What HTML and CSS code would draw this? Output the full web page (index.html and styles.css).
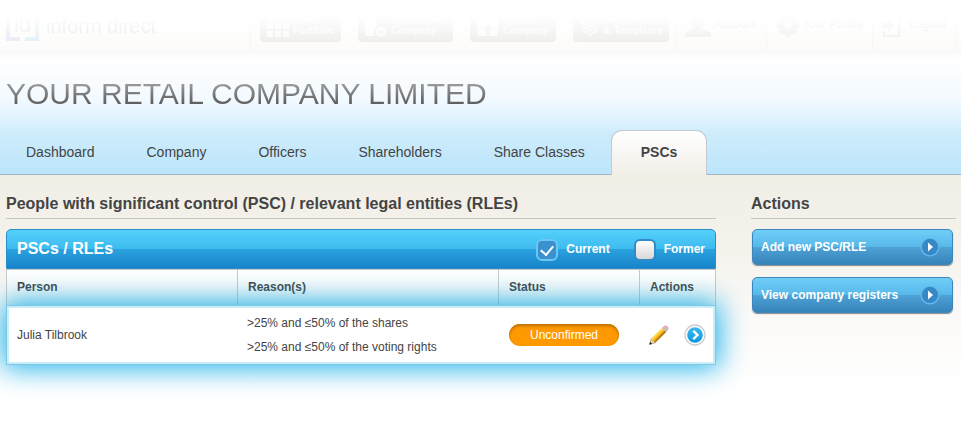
FILE: index.html
```html
<!DOCTYPE html>
<html lang="en">
<head>
<meta charset="utf-8">
<title>Your Retail Company Limited</title>
<link rel="stylesheet" href="styles.css">
</head>
<body>
<header class="topbar">
  <div class="topbar-content">
    <a class="logo" href="#">
      <span class="logo-mark">id</span>
      <span class="logo-text">inform direct</span>
    </a>
    <div class="shortcuts">
      <a class="shortcut" href="#">
        <svg width="22" height="22" viewBox="0 0 22 22" fill="#fff"><path d="M0 0h6v6H0zM8 0h6v6H8zM16 0h6v6h-6zM0 8h6v6H0zM8 8h6v6H8zM16 8h6v6h-6zM0 16h6v6H0zM8 16h6v6H8zM16 16h6v6h-6z"/></svg>
        <span>Your<br>Portfolio</span>
      </a>
      <a class="shortcut" href="#">
        <svg width="22" height="22" viewBox="0 0 22 22" fill="#fff"><path d="M0 2h11v10a6 6 0 0 0-1 9H0z"/><circle cx="16" cy="17" r="5"/><path d="M16 14v6M13 17h6" stroke="#bbb" stroke-width="1.6"/></svg>
        <span>Incorporate<br>Company</span>
      </a>
      <a class="shortcut" href="#">
        <svg width="22" height="22" viewBox="0 0 22 22" fill="#fff"><path d="M0 4h22l-2 17H1z"/><path d="M11 9l6 6h-4v5H9v-5H5z" fill="#bbb"/></svg>
        <span>Import<br>Company</span>
      </a>
      <a class="shortcut" href="#">
        <svg width="20" height="22" viewBox="0 0 22 22" fill="none" stroke="#fff" stroke-width="1.5"><path d="M11 2l9 5-9 5-9-5zM2 11l9 5 9-5M2 15l9 6 9-6"/></svg>
        <span>Documents<br>&amp; Templates</span>
      </a>
    </div>
    <nav class="user-links">
      <a href="#"><svg width="26" height="24" viewBox="0 0 26 24"><path d="M0 24v-3c0-3 8-4 9-6-5-6-3-14 4-14s9 8 4 14c1 2 9 3 9 6v3z"/></svg>Account</a>
      <a href="#"><svg width="24" height="24" viewBox="0 0 24 24"><circle cx="12" cy="12" r="6.500" fill="none" stroke="#bbb" stroke-width="6"/><path d="M12 0v5M12 19v5M0 12h5M19 12h5M4 4l3 3M17 17l3 3M20 4l-3 3M7 17l-3 3" stroke="#bbb" stroke-width="5"/></svg>Your Profile</a>
      <a href="#"><svg width="18" height="24" viewBox="0 0 18 24"><path d="M2 18v5h15V1H2v4" fill="none" stroke="#bbb" stroke-width="2"/><path d="M0 9h6V5l6 7-6 7v-4H0z"/></svg>Logout</a>
    </nav>
  </div>
</header>

<section class="hero">
  <h1 class="company-name">YOUR RETAIL COMPANY LIMITED</h1>
  <nav class="tabs">
    <a class="tab" href="#">Dashboard</a>
    <a class="tab" href="#">Company</a>
    <a class="tab" href="#">Officers</a>
    <a class="tab" href="#">Shareholders</a>
    <a class="tab" href="#">Share Classes</a>
    <a class="tab tab-active" href="#" aria-current="page">PSCs</a>
  </nav>
</section>

<main class="content">
  <section class="people">
    <h2 class="section-title">People with significant control (PSC) / relevant legal entities (RLEs)</h2>
    <div class="panel">
      <div class="panel-header">
        <h3 class="panel-title">PSCs / RLEs</h3>
        <label class="filter"><input class="check" type="checkbox" checked>Current</label>
        <label class="filter"><input class="check" type="checkbox">Former</label>
      </div>
      <table class="grid">
        <colgroup><col class="col-person"><col class="col-reasons"><col class="col-status"><col class="col-actions"></colgroup>
        <thead>
          <tr><th>Person</th><th>Reason(s)</th><th>Status</th><th>Actions</th></tr>
        </thead>
        <tbody>
          <tr class="row-highlight">
            <td>Julia Tilbrook</td>
            <td class="reasons">&gt;25% and ≤50% of the shares<br>&gt;25% and ≤50% of the voting rights</td>
            <td><span class="badge">Unconfirmed</span></td>
            <td>
              <div class="row-actions">
                <button class="icon-button" type="button" aria-label="Edit">
                  <svg width="20" height="20" viewBox="0 0 20 20">
                    <path d="M.6 19.4l1.6-5.8 4.2 4.2z" fill="#f0d6a4" stroke="#8d7650" stroke-width=".5"/>
                    <path d="M.4 19.6l.7-2.8 2.1 2.1z" fill="#222"/>
                    <path d="M2.2 13.6L13 2.9l1.5 1.5L3.7 15.1z" fill="#ffd84c"/>
                    <path d="M3.5 15L14.4 4.2l1.6 1.6L5.1 16.6z" fill="#fbb416"/>
                    <path d="M5 16.5L15.8 5.6l1.4 1.4L6.4 17.8z" fill="#b77808"/>
                    <path d="M13 2.9l1.8-1.7 4.1 4.1-1.7 1.7z" fill="#b9bec5"/>
                    <path d="M14.8 1.2c1.2-1.2 2.6-.7 3.7.4s1.600 2.500.4 3.700z" fill="#eba3b0"/>
                  </svg>
                </button>
                <button class="icon-button" type="button" aria-label="Open">
                  <svg width="22" height="22" viewBox="0 0 22 22">
                    <defs><linearGradient id="disc" x1="0" y1="0" x2="0" y2="1"><stop offset="0" stop-color="#3fb9ee"/><stop offset="1" stop-color="#0799df"/></linearGradient></defs>
                    <circle cx="11" cy="11" r="10" fill="#fff" stroke="#ccc" stroke-width="1.300"/>
                    <circle cx="11" cy="11" r="7.800" fill="url(#disc)"/>
                    <path d="M9.300 6.800l4.200 4.200-4.200 4.200" fill="none" stroke="#fff" stroke-width="2.400"/>
                  </svg>
                </button>
              </div>
            </td>
          </tr>
        </tbody>
      </table>
    </div>
  </section>

  <aside class="sidebar">
    <h2 class="section-title">Actions</h2>
    <div class="action-list">
      <button class="action" type="button">Add new PSC/RLE
        <svg width="20" height="20" viewBox="0 0 20 20"><circle cx="10" cy="10" r="8.800" fill="#3688c7" stroke="#65bdee" stroke-width="1.200"/><path d="M8 5.500l5 4.500-5 4.500z" fill="#fff"/></svg>
      </button>
      <button class="action" type="button">View company registers
        <svg width="20" height="20" viewBox="0 0 20 20"><circle cx="10" cy="10" r="8.800" fill="#3688c7" stroke="#65bdee" stroke-width="1.200"/><path d="M8 5.500l5 4.500-5 4.500z" fill="#fff"/></svg>
      </button>
    </div>
  </aside>
</main>
</body>
</html>
```
FILE: styles.css
```css
* {
  box-sizing: border-box;
}

body {
  margin: 0;
  background: #fff;
  color: #444;
  font-family: "Liberation Sans", Arial, sans-serif;
  font-size: 12px;
}

a {
  color: inherit;
  text-decoration: none;
}

h1, h2, h3 {
  margin: 0;
}

button {
  font: inherit;
  cursor: pointer;
}

svg {
  display: block;
  flex: none;
}

/* Top bar: fades in from the top of the window */
.topbar {
  height: 50px;
  background: linear-gradient(#fff 20px, #fcfbf9);
}

.topbar-content {
  display: flex;
  height: 50px;
  padding-right: 5px;
  -webkit-mask-image: linear-gradient(transparent 15px, rgba(0, 0, 0, 0.2) 46px);
  mask-image: linear-gradient(transparent 15px, rgba(0, 0, 0, 0.2) 46px);
}

.logo {
  display: flex;
  gap: 7px;
  flex: 1;
  padding: 8px 6px;
}

.logo-mark {
  width: 33px;
  height: 33px;
  border: 4px solid;
  border-top: 0;
  border-image: linear-gradient(90deg, #8fa0d8 14px, transparent 14px, transparent 19px, #6db8f0 19px) 4;
  color: #999;
  font-size: 22px;
  line-height: 34px;
  text-align: center;
}

.logo-text {
  color: #888;
  font-size: 20px;
  line-height: 36px;
}

.shortcuts {
  display: flex;
  gap: 17px;
  padding: 0 6px 8px 9px;
  border-left: 1px solid #ddd;
}

.shortcut {
  display: flex;
  align-items: flex-end;
  gap: 4px;
  padding: 0 7px 5px;
  border-radius: 0 0 4px 4px;
  background: #b0b0b0;
  color: #fff;
  font-size: 10px;
  font-weight: bold;
  line-height: 12px;
}

.user-links {
  display: flex;
  border-right: 1px solid #ddd;
}

.user-links a {
  display: flex;
  gap: 2px;
  padding: 13px 9px;
  border-left: 1px solid #ddd;
  color: #888;
  fill: #bbb;
  line-height: 22px;
}

.user-links a:last-child {
  gap: 9px;
}

/* Company banner and tabs */
.hero {
  height: 125px;
  padding: 26px 0 0;
  border-bottom: 1px solid #9db8c4;
  background: linear-gradient(#f7f9f9, #fff 10px, #f3faff 48px, #e2f4ff 66px, #cdecfb 84px, #bce5fb);
}

.company-name {
  width: fit-content;
  margin-left: 6px;
  background: linear-gradient(#a0a0a0 6px, #585858 30px);
  -webkit-background-clip: text;
  background-clip: text;
  color: transparent;
  font-size: 30px;
  font-weight: normal;
  line-height: 36px;
}

.tabs {
  display: flex;
  margin-top: 18px;
}

.tab {
  padding: 0 26px;
  color: #444;
  font-size: 14px;
  line-height: 44px;
}

.tab-active {
  height: 45px;
  padding: 0 29px;
  border: 1px solid #c3cbd0;
  border-bottom: 0;
  border-radius: 11px 11px 0 0;
  background: linear-gradient(#fff, #f1eee7);
  font-weight: bold;
  line-height: 42px;
}

/* Page body */
.content {
  display: flex;
  gap: 35px;
  min-height: 247px;
  padding: 18px 5px 0 6px;
  background: linear-gradient(#f1eee6, #f5f2ec 70px, #fbfaf8 145px, #fff 215px);
}

.people {
  flex: 1;
}

.sidebar {
  flex: 0 0 205px;
}

.section-title {
  padding-bottom: 4px;
  border-bottom: 1px solid #c9c6c0;
  font-size: 16px;
  line-height: 21px;
}

.panel {
  margin-top: 10px;
}

.panel-header {
  display: flex;
  align-items: center;
  height: 40px;
  padding: 0 10px;
  border: 1px solid #2a8cc9;
  border-radius: 5px 5px 0 0;
  background: linear-gradient(#54d0fa, #3dbbef 50%, #2ba2de 50%, #1784cb);
  color: #fff;
}

.panel-title {
  flex: 1;
  font-size: 16px;
}

.filter {
  display: flex;
  align-items: center;
  gap: 8px;
  margin-left: 24px;
  font-weight: bold;
}

.check {
  appearance: none;
  display: grid;
  place-items: center;
  width: 22px;
  height: 22px;
  margin: 2px 0 0;
  border: 2px solid #3489ca;
  border-radius: 6px;
  background: linear-gradient(#fff, #d8d8d8);
}

.check:checked {
  border-color: #6cc7f4;
  background: #3b91d0;
}

.check:checked::before {
  content: "";
  width: 6px;
  height: 10px;
  margin-bottom: 2px;
  border: solid #fff;
  border-width: 0 2px 2px 0;
  transform: rotate(40deg);
}

.grid {
  width: 100%;
  border-collapse: separate;
  border-spacing: 0;
  table-layout: fixed;
}

.col-person { width: 231px; }
.col-reasons { width: auto; }
.col-status { width: 141px; }
.col-actions { width: 77px; }

.grid th {
  height: 36px;
  padding: 0 10px 2px;
  border-top: 1px solid #c8c8c8;
  border-left: 1px solid #c8c8c8;
  background: linear-gradient(#fff, #f4f2ee);
  color: #444;
  font-size: 12px;
  text-align: left;
}

.grid th:last-child {
  border-right: 1px solid #c8c8c8;
}

.grid td {
  height: 60px;
  padding: 0 11px;
}

.grid .reasons {
  padding-left: 10px;
  line-height: 24px;
}

.row-highlight {
  position: relative;
  background: #fff;
  outline: 1px solid #7fc8e4;
  outline-offset: -1px;
  box-shadow: inset 0 0 0 3px #c9eefa, 0 0 28px 3px #1bb2ec;
}

.badge {
  display: block;
  width: 110px;
  border-radius: 11px;
  background: #ff9900;
  box-shadow: inset 0 2px 3px #b87108;
  color: #fff;
  line-height: 22px;
  text-align: center;
}

.row-actions {
  display: flex;
  align-items: center;
  justify-content: space-between;
  margin: 0 -1px;
}

.icon-button {
  padding: 0;
  border: 0;
  background: none;
}

/* Sidebar buttons */
.action-list {
  display: grid;
  gap: 12px;
  padding: 10px 3px 0 1px;
}

.action {
  display: flex;
  align-items: center;
  justify-content: space-between;
  height: 36px;
  padding: 0 12px 0 8px;
  border: 1px solid #3a86bd;
  border-radius: 5px;
  background: linear-gradient(#70cdf7, #57b8e8 50%, #4ea2d5 50%, #3783bb);
  box-shadow: 0 1px 1px #888;
  color: #fff;
  font-weight: bold;
}
```
